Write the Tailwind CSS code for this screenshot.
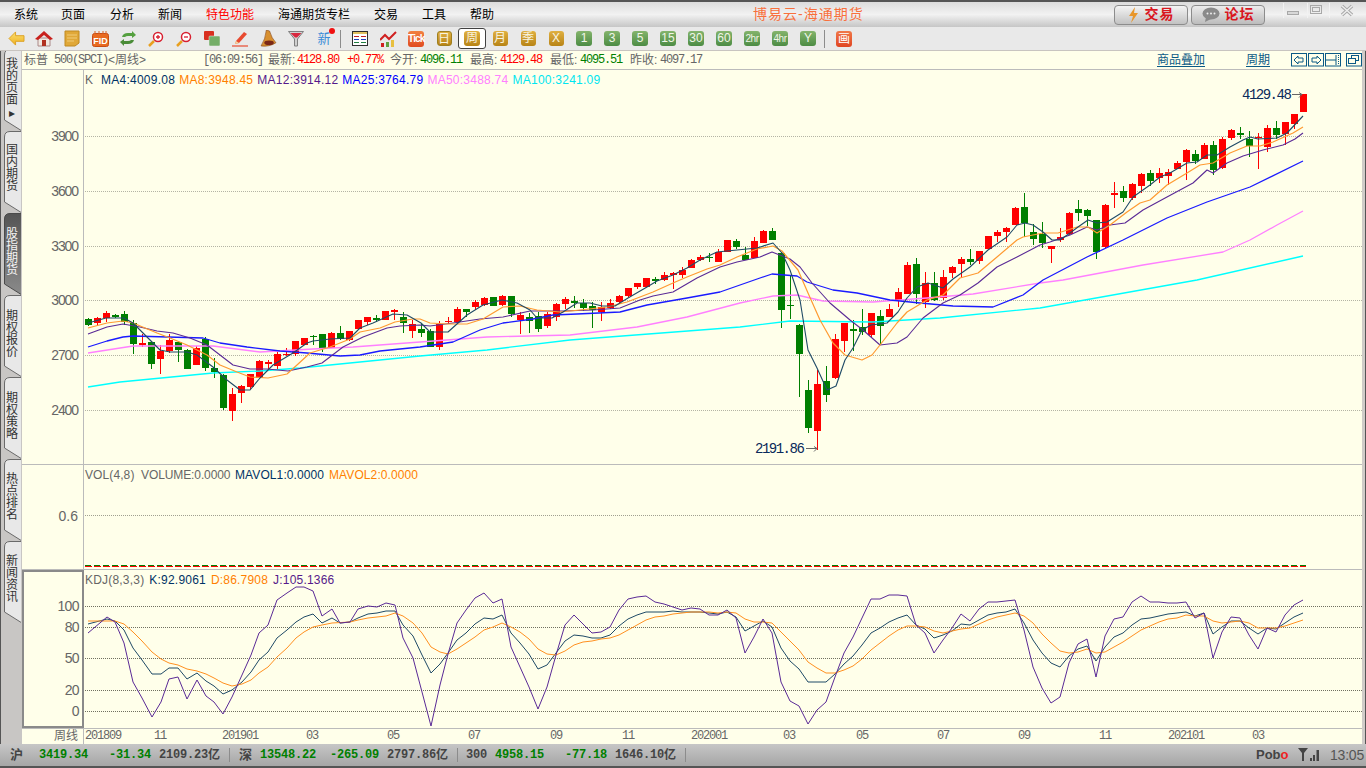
<!DOCTYPE html>
<html lang="zh-CN">
<head>
  <meta charset="UTF-8"/>
  <title>博易云-海通期货</title>
  <script src="https://cdn.jsdelivr.net/npm/@tailwindcss/browser@4"></script>
</head>
<body class="bg-[#c8c8c8] font-['Liberation_Sans','Noto_Sans_CJK_SC',sans-serif] text-[12px]">
<div class="w-[1366px] h-[768px] overflow-hidden flex flex-col border-t-2 border-[#555555]">

  <!-- menu bar -->
  <div class="h-[25px] shrink-0 flex items-center pl-[14px] text-black bg-linear-to-b from-[#dcdcdc] via-[#f2f2f2] to-[#c6c6c6]">
    <span class="w-[47px]">系统</span>
    <span class="w-[49px]">页面</span>
    <span class="w-[48px]">分析</span>
    <span class="w-[48px]">新闻</span>
    <span class="w-[72px] text-[#ff0000]">特色功能</span>
    <span class="w-[96px]">海通期货专栏</span>
    <span class="w-[48px]">交易</span>
    <span class="w-[48px]">工具</span>
    <span class="w-[48px]">帮助</span>
    <span class="ml-[235px] w-[361px] text-[14px] tracking-[1px] text-[#f8703c]">博易云-海通期货</span>
    <div class="flex gap-[3px]">
      <div class="w-[74px] h-[20px] rounded-[4px] border border-[#8c8c8c] bg-linear-to-b from-[#f4f4f4] to-[#c2c2c2] flex items-center justify-center gap-[6px] text-[14px] font-bold tracking-[1px] text-[#d9161e]">
        <svg width="11" height="16" viewBox="0 0 11 16"><path d="M7 0 L1 9 H5 L3 16 L10 6 H6 Z" fill="#e8962a"/></svg>
        <span>交易</span>
      </div>
      <div class="w-[74px] h-[20px] rounded-[4px] border border-[#8c8c8c] bg-linear-to-b from-[#ececec] to-[#bcbcbc] flex items-center justify-center gap-[5px] text-[14px] font-bold tracking-[1px] text-[#d9161e]">
        <svg width="18" height="15" viewBox="0 0 18 15"><ellipse cx="9" cy="6.5" rx="8.5" ry="6" fill="#8a8a8a"/><path d="M4 10 L3 15 L9 12 Z" fill="#8a8a8a"/><circle cx="5.5" cy="6.5" r="1" fill="#eee"/><circle cx="9" cy="6.5" r="1" fill="#eee"/><circle cx="12.5" cy="6.5" r="1" fill="#eee"/></svg>
        <span>论坛</span>
      </div>
    </div>
    <div class="ml-[17px] flex items-start h-[22px] -mt-[2px]">
      <svg width="84" height="16" viewBox="0 0 84 16">
        <rect x="1" y="0" width="1" height="15" fill="#f2f2f2"/>
        <rect x="25" y="0" width="1" height="15" fill="#f2f2f2"/>
        <rect x="47" y="0" width="1" height="15" fill="#f2f2f2"/>
        <rect x="5.500" y="8.500" width="11" height="3" fill="#d8d8d8" stroke="#a8a8a8"/>
        <rect x="28.500" y="2.500" width="11" height="8" fill="none" stroke="#a8a8a8"/>
        <rect x="30.500" y="4.500" width="7" height="4" fill="none" stroke="#a8a8a8"/>
        <path d="M60 3 L70 12 M70 3 L60 12" stroke="#a8a8a8" stroke-width="3.500"/>
        <path d="M60 3 L70 12 M70 3 L60 12" stroke="#eeeeee" stroke-width="1.500"/>
      </svg>
    </div>
  </div>

  <!-- toolbar -->
  <div class="h-[23px] shrink-0 flex items-center pl-[2px] bg-[#e9e9e9] text-[12px]">
    <div class="w-[28px] flex justify-center"><svg width="17" height="15" viewBox="0 0 18 16"><defs><linearGradient id="backfill" x1="0" y1="0" x2="0" y2="1"><stop offset="0" stop-color="#fbe070"/><stop offset="1" stop-color="#efb020"/></linearGradient></defs><path d="M8 1 L1 8 L8 15 V11 H17 V5 H8 Z" fill="url(#backfill)" stroke="#dca020"/></svg></div>
    <div class="w-[28px] flex justify-center"><svg width="18" height="17" viewBox="0 0 18 17"><path d="M3 8 V16 H15 V8 Z" fill="#f0e8e0" stroke="#a88"/><rect x="7" y="10" width="4" height="6" fill="#b03020"/><path d="M0 9 L9 1 L18 9 L15 10 L9 5 L3 10 Z" fill="#c8201c"/></svg></div>
    <div class="w-[28px] flex justify-center"><svg width="16" height="17" viewBox="0 0 16 17"><path d="M1 1 H15 V13 L11 16 H1 Z" fill="#e0a838" stroke="#c08a20"/><path d="M3 5 H13 M3 8 H13 M3 11 H10" stroke="#f0cc78"/></svg></div>
    <div class="w-[28px] flex justify-center"><svg width="17" height="16" viewBox="0 0 17 16"><rect x="0.500" y="2.500" width="16" height="13" rx="2" fill="#e86a20" stroke="#c84c14"/><path d="M3 0 V3 M7 0 V3 M11 0 V3 M14 0 V3" stroke="#d86020"/><text x="8.500" y="13" text-anchor="middle" font-size="9" font-weight="700" fill="#fff">FID</text></svg></div>
    <div class="w-[28px] flex justify-center"><svg width="16" height="15" viewBox="0 0 16 15"><path d="M2 6 Q3 2 8 2 H12 V0 L16 4 L12 7 V5 H8 Q6 5 5 6 Z" fill="#55a040"/><path d="M14 9 Q13 13 8 13 H4 V15 L0 11 L4 8 V10 H8 Q10 10 11 9 Z" fill="#4a8c38"/></svg></div>
    <div class="w-[28px] flex justify-center"><svg width="16" height="16" viewBox="0 0 16 16"><path d="M1 15 L6 10" stroke="#e8a020" stroke-width="2.500"/><circle cx="10" cy="6" r="4.500" fill="#fff" stroke="#d82030" stroke-width="1.500"/><path d="M8 6 H12 M10 4 V8" stroke="#d82030" stroke-width="1.300"/></svg></div>
    <div class="w-[28px] flex justify-center"><svg width="16" height="16" viewBox="0 0 16 16"><path d="M1 15 L6 10" stroke="#e8a020" stroke-width="2.500"/><circle cx="10" cy="6" r="4.500" fill="#fff" stroke="#d82030" stroke-width="1.500"/><path d="M8 6 H12" stroke="#d82030" stroke-width="1.300"/></svg></div>
    <div class="w-[28px] flex justify-center"><svg width="16" height="15" viewBox="0 0 16 15"><rect x="0" y="0" width="10" height="9" rx="1" fill="#d83020"/><rect x="5" y="5" width="11" height="10" rx="1" fill="#74ae68" stroke="#e9e9e9" stroke-width="0.500"/></svg></div>
    <div class="w-[28px] flex justify-center"><svg width="16" height="16" viewBox="0 0 16 16"><path d="M4 10 L12 1 L15 3 L7 12 L3 13 Z" fill="#e84a30"/><path d="M3 13 L4 10 L7 12 Z" fill="#f4d8a0"/><path d="M0 15 H16" stroke="#e84a30" stroke-width="1.200"/></svg></div>
    <div class="w-[28px] flex justify-center"><svg width="17" height="17" viewBox="0 0 16 16"><path d="M6 0 L9 1 Q11 8 15 12 Q9 16 1 15 Q5 9 6 0 Z" fill="#d89030" stroke="#8a4a18" stroke-width="0.600"/><ellipse cx="8.500" cy="12" rx="4.500" ry="2.200" fill="#7a2818"/></svg></div>
    <div class="w-[28px] flex justify-center"><svg width="16" height="16" viewBox="0 0 16 16"><path d="M0.500 0.500 H15.500 L9.500 8 V15 H6.500 V8 Z" fill="#d0d0d0" stroke="#808080"/><path d="M2.500 2 H13.500 L9 6.500 H7 Z" fill="#d82840"/></svg></div>
    <div class="w-[28px] relative flex justify-center text-[13px] text-[#3a8cd8]">新<span class="absolute right-[3px] -top-[1px] size-[6px] rounded-full bg-[#f01010]"></span></div>

    <span class="ml-[2px] mr-[5px] w-px h-[18px] bg-[#8c8c8c]"></span>

    <div class="w-[28px] flex justify-center"><svg width="16" height="15" viewBox="0 0 16 15"><rect x="0.500" y="0.500" width="15" height="14" fill="#fff" stroke="#303030"/><rect x="1" y="1" width="14" height="2" fill="#e0c060"/><path d="M2 5.500 H7 M9 5.500 H14" stroke="#c02020"/><path d="M2 8.500 H7 M9 8.500 H14" stroke="#2040c0"/><path d="M2 11.500 H7 M9 11.500 H14" stroke="#208040"/></svg></div>
    <div class="w-[28px] flex justify-center"><svg width="17" height="16" viewBox="0 0 17 16"><path d="M0 9 L5 4 L9 8 L16 1" fill="none" stroke="#d02020" stroke-width="2"/><rect x="1" y="12" width="3" height="4" fill="#d02020"/><rect x="6" y="11" width="3" height="5" fill="#60a040"/><rect x="11" y="9" width="3" height="7" fill="#e8c040"/></svg></div>
    <div class="w-[28px] flex justify-center"><span class="w-[16px] h-[16px] rounded-[3px] bg-linear-to-b from-[#f28040] to-[#e04a20] text-[#fff] text-[10px] font-bold tracking-[-0.8px] leading-[16px] text-center">Tick</span></div>
    <div class="w-[28px] flex justify-center"><span class="w-[15px] h-[15px] rounded-[3px] bg-linear-to-b from-[#e0b040] to-[#b88414] text-[#f8f4e0] text-[12px] leading-[15px] text-center border border-[#a08020]">日</span></div>
    <div class="w-[28px] flex justify-center"><span class="w-[28px] h-[21px] flex items-center justify-center rounded-[3px] bg-white border border-[#404040]"><span class="w-[16px] h-[15px] rounded-[3px] bg-linear-to-b from-[#e0b040] to-[#b88414] text-[#f8f4e0] text-[12px] leading-[15px] text-center">周</span></span></div>
    <div class="w-[28px] flex justify-center"><span class="w-[15px] h-[15px] rounded-[3px] bg-linear-to-b from-[#e0b040] to-[#b88414] text-[#f8f4e0] text-[12px] leading-[15px] text-center">月</span></div>
    <div class="w-[28px] flex justify-center"><span class="w-[15px] h-[15px] rounded-[3px] bg-linear-to-b from-[#e0b040] to-[#b88414] text-[#f8f4e0] text-[12px] leading-[15px] text-center">季</span></div>
    <div class="w-[28px] flex justify-center"><span class="w-[15px] h-[15px] rounded-[3px] bg-linear-to-b from-[#e0b040] to-[#b88414] text-[#f8f4e0] text-[12px] leading-[15px] text-center">X</span></div>
    <div class="w-[28px] flex justify-center"><span class="w-[16px] h-[15px] rounded-[3px] bg-linear-to-b from-[#84b46c] to-[#4c8c44] text-[#f0f6e8] text-[12px] leading-[15px] text-center">1</span></div>
    <div class="w-[28px] flex justify-center"><span class="w-[16px] h-[15px] rounded-[3px] bg-linear-to-b from-[#84b46c] to-[#4c8c44] text-[#f0f6e8] text-[12px] leading-[15px] text-center">3</span></div>
    <div class="w-[28px] flex justify-center"><span class="w-[16px] h-[15px] rounded-[3px] bg-linear-to-b from-[#84b46c] to-[#4c8c44] text-[#f0f6e8] text-[12px] leading-[15px] text-center">5</span></div>
    <div class="w-[28px] flex justify-center"><span class="w-[16px] h-[15px] rounded-[3px] bg-linear-to-b from-[#84b46c] to-[#4c8c44] text-[#f0f6e8] text-[12px] leading-[15px] text-center">15</span></div>
    <div class="w-[28px] flex justify-center"><span class="w-[16px] h-[15px] rounded-[3px] bg-linear-to-b from-[#84b46c] to-[#4c8c44] text-[#f0f6e8] text-[12px] leading-[15px] text-center">30</span></div>
    <div class="w-[28px] flex justify-center"><span class="w-[16px] h-[15px] rounded-[3px] bg-linear-to-b from-[#84b46c] to-[#4c8c44] text-[#f0f6e8] text-[12px] leading-[15px] text-center">60</span></div>
    <div class="w-[28px] flex justify-center"><span class="w-[16px] h-[15px] rounded-[3px] bg-linear-to-b from-[#84b46c] to-[#4c8c44] text-[#f0f6e8] text-[10px] tracking-[-0.5px] leading-[15px] text-center">2hr</span></div>
    <div class="w-[28px] flex justify-center"><span class="w-[16px] h-[15px] rounded-[3px] bg-linear-to-b from-[#84b46c] to-[#4c8c44] text-[#f0f6e8] text-[10px] tracking-[-0.5px] leading-[15px] text-center">4hr</span></div>
    <div class="w-[28px] flex justify-center"><span class="w-[16px] h-[15px] rounded-[3px] bg-linear-to-b from-[#84b46c] to-[#4c8c44] text-[#f0f6e8] text-[12px] leading-[15px] text-center">Y</span></div>

    <span class="ml-[2px] mr-[5px] w-px h-[18px] bg-[#8c8c8c]"></span>

    <span class="w-[16px] h-[16px] ml-[6px] rounded-[3px] bg-linear-to-b from-[#f07848] to-[#e04420] text-[#fff] text-[12px] leading-[16px] text-center">画</span>
  </div>
  <div class="h-px shrink-0 bg-[#c8c4c0]"></div>

  <!-- middle -->
  <div class="flex-1 flex min-h-0 border-l border-[#555555]">

    <!-- side tabs -->
    <div class="w-[21px] shrink-0 pl-[3px] bg-[#c8c6c4] flex flex-col text-[#333333]">
      <div class="relative h-[80px] w-[17px]">
        <svg class="absolute inset-0" width="17" height="80" viewBox="0 2 17 80"><path d="M.5 71 V6 Q.5 .5 6 .5 H18 V82 Z" fill="#e8e8e8" stroke="#6a6a6a"/></svg>
        <div class="relative pl-[2px] pt-[7px] w-[14px] leading-[12px] text-center">我的页面<span class="block text-[12px] leading-[14px] -ml-[1px]">▸</span></div>
      </div>
      <div class="relative h-[82px] w-[17px]">
        <svg class="absolute inset-0" width="17" height="82" viewBox="0 0 17 82"><path d="M.5 71 V6 Q.5 .5 6 .5 H18 V82 Z" fill="#e8e8e8" stroke="#6a6a6a"/></svg>
        <div class="relative pl-[2px] pt-[13px] w-[14px] leading-[12px] text-center">国内期货</div>
      </div>
      <div class="relative h-[82px] w-[17px]">
        <svg class="absolute inset-0" width="17" height="82" viewBox="0 0 17 82"><defs><linearGradient id="tabon" x1="0" y1="0" x2="0" y2="1"><stop offset="0" stop-color="#555555"/><stop offset="1" stop-color="#8a8a8a"/></linearGradient></defs><path d="M.5 71 V6 Q.5 .5 6 .5 H18 V82 Z" fill="url(#tabon)" stroke="#4a4a4a"/></svg>
        <div class="relative pl-[2px] pt-[15px] w-[14px] leading-[12px] text-center text-[#f4f4f4]">股指期货</div>
      </div>
      <div class="relative h-[82px] w-[17px]">
        <svg class="absolute inset-0" width="17" height="82" viewBox="0 0 17 82"><path d="M.5 71 V6 Q.5 .5 6 .5 H18 V82 Z" fill="#e8e8e8" stroke="#6a6a6a"/></svg>
        <div class="relative pl-[2px] pt-[15px] w-[14px] leading-[12px] text-center">期权报价</div>
      </div>
      <div class="relative h-[82px] w-[17px]">
        <svg class="absolute inset-0" width="17" height="82" viewBox="0 0 17 82"><path d="M.5 71 V6 Q.5 .5 6 .5 H18 V82 Z" fill="#e8e8e8" stroke="#6a6a6a"/></svg>
        <div class="relative pl-[2px] pt-[15px] w-[14px] leading-[12px] text-center">期权策略</div>
      </div>
      <div class="relative h-[82px] w-[17px]">
        <svg class="absolute inset-0" width="17" height="82" viewBox="0 0 17 82"><path d="M.5 71 V6 Q.5 .5 6 .5 H18 V82 Z" fill="#e8e8e8" stroke="#6a6a6a"/></svg>
        <div class="relative pl-[2px] pt-[14px] w-[14px] leading-[12px] text-center">热点排名</div>
      </div>
      <div class="relative h-[82px] w-[17px]">
        <svg class="absolute inset-0" width="17" height="82" viewBox="0 0 17 82"><path d="M.5 71 V6 Q.5 .5 6 .5 H18 V82 Z" fill="#e8e8e8" stroke="#6a6a6a"/></svg>
        <div class="relative pl-[2px] pt-[14px] w-[14px] leading-[12px] text-center">新闻资讯</div>
      </div>
    </div>

    <!-- chart column -->
    <div class="w-[1340px] shrink-0 flex flex-col bg-[#ffffea] text-[#666666]">
      <!-- quote line -->
      <div class="h-[19px] shrink-0 border-b border-[#bbbbbb] flex items-center pl-[2px] whitespace-nowrap">
        <span class="w-[179px] flex"><span>标普</span><span class="ml-[6px] font-['Liberation_Mono'] tracking-[-1.2px]">500(SPCI)</span><span>&lt;周线&gt;</span></span>
        <span class="w-[65px] font-['Liberation_Mono'] tracking-[-1.2px]">[06:09:56]</span>
        <span class="w-[29px]">最新:</span>
        <span class="w-[50px] font-['Liberation_Mono'] tracking-[-1.2px] text-[#ff0000]">4128.80</span>
        <span class="w-[43px] font-['Liberation_Mono'] tracking-[-1.2px] text-[#ff0000]">+0.77%</span>
        <span class="w-[30px]">今开:</span>
        <span class="w-[50px] font-['Liberation_Mono'] tracking-[-1.2px] text-[#008000]">4096.11</span>
        <span class="w-[30px]">最高:</span>
        <span class="w-[50px] font-['Liberation_Mono'] tracking-[-1.2px] text-[#ff0000]">4129.48</span>
        <span class="w-[30px]">最低:</span>
        <span class="w-[50px] font-['Liberation_Mono'] tracking-[-1.2px] text-[#008000]">4095.51</span>
        <span class="w-[30px]">昨收:</span>
        <span class="w-[497px] font-['Liberation_Mono'] tracking-[-1.2px]">4097.17</span>
        <span class="w-[89px] text-[#0b5a86] underline underline-offset-2">商品叠加</span>
        <span class="w-[45px] text-[#0b5a86] underline underline-offset-2">周期</span>
        <svg width="71" height="14" viewBox="0 0 71 14" fill="none" stroke="#0b5a86">
          <rect x=".5" y=".5" width="15" height="12.500"/><path d="M12 5 H7 V3 L3 7 L7 11 V9 H12 Z"/>
          <rect x="17.500" y=".5" width="15" height="12.500"/><path d="M21 5 H26 V3 L30 7 L26 11 V9 H21 Z"/>
          <rect x="34.500" y=".5" width="15" height="12.500"/><path d="M34.500 7 H45 M45 2 V12" /><path d="M47.500 2 V12" stroke-dasharray="1 1"/>
          <rect x="55.500" y=".5" width="15" height="12.500"/><rect x="60.500" y="2.500" width="7" height="5"/><rect x="57.500" y="5.500" width="7" height="5" fill="#ffffea"/>
        </svg>
      </div>

      <!-- price pane -->
      <div class="h-[395px] shrink-0 flex border-b border-[#bbbbbb]">
        <div class="relative w-[62px] shrink-0 border-r border-[#bbbbbb] text-[14px] tracking-[-1.1px] text-[#666666]">
          <span class="absolute right-[5px] top-[58px] leading-[16px]">3900</span>
          <span class="absolute right-[5px] top-[113px] leading-[16px]">3600</span>
          <span class="absolute right-[5px] top-[168px] leading-[16px]">3300</span>
          <span class="absolute right-[5px] top-[222px] leading-[16px]">3000</span>
          <span class="absolute right-[5px] top-[277px] leading-[16px]">2700</span>
          <span class="absolute right-[5px] top-[332px] leading-[16px]">2400</span>
        </div>
        <div class="relative flex-1">
          <svg id="price" class="block" width="1278" height="394" viewBox="84 70 1278 394"></svg>
          <div class="absolute left-[1px] top-[3px] flex gap-[4px] leading-[14px] whitespace-nowrap tracking-[0.25px]">
            <span class="w-[12px] text-[#666666]">K</span>
            <span class="text-[#003366]">MA4:4009.08</span>
            <span class="text-[#ff8000]">MA8:3948.45</span>
            <span class="text-[#551a8b]">MA12:3914.12</span>
            <span class="text-[#0000ff]">MA25:3764.79</span>
            <span class="text-[#ff80ff]">MA50:3488.74</span>
            <span class="text-[#00e6f0]">MA100:3241.09</span>
          </div>
        </div>
      </div>

      <!-- volume pane -->
      <div class="h-[105px] shrink-0 flex border-b border-[#bbbbbb]">
        <div class="relative w-[62px] shrink-0 border-r border-[#bbbbbb] text-[14px] text-[#666666]">
          <span class="absolute right-[5px] top-[43px] leading-[16px]">0.6</span>
        </div>
        <div class="relative flex-1">
          <svg id="vol" class="block" width="1278" height="104" viewBox="84 465 1278 104"></svg>
          <div class="absolute left-[1px] top-[3px] flex leading-[14px] whitespace-nowrap tracking-[0.1px]">
            <span class="w-[56px] text-[#666666]">VOL(4,8)</span>
            <span class="w-[94px] tracking-[-0.1px] text-[#666666]">VOLUME:0.0000</span>
            <span class="w-[94px] text-[#003366]">MAVOL1:0.0000</span>
            <span class="text-[#ff8000]">MAVOL2:0.0000</span>
          </div>
        </div>
      </div>

      <!-- kdj pane -->
      <div class="h-[159px] shrink-0 flex border-b border-[#bbbbbb]">
        <div class="relative w-[62px] shrink-0 border-2 border-[#8a8a8a] border-b-2 text-[14px] tracking-[-0.6px] text-[#666666]">
          <span class="absolute right-[3px] top-[26px] leading-[16px]">100</span>
          <span class="absolute right-[3px] top-[47px] leading-[16px]">80</span>
          <span class="absolute right-[3px] top-[78px] leading-[16px]">50</span>
          <span class="absolute right-[3px] top-[110px] leading-[16px]">20</span>
          <span class="absolute right-[3px] top-[131px] leading-[16px]">0</span>
        </div>
        <div class="relative flex-1">
          <svg id="kdj" class="block" width="1278" height="158" viewBox="84 570 1278 158"></svg>
          <div class="absolute left-[1px] top-[3px] flex gap-[5px] leading-[14px] whitespace-nowrap tracking-[0.2px]">
            <span class="text-[#666666]">KDJ(8,3,3)</span>
            <span class="text-[#003366]">K:92.9061</span>
            <span class="text-[#ff8000]">D:86.7908</span>
            <span class="text-[#551a8b]">J:105.1366</span>
          </div>
        </div>
      </div>

      <!-- date axis -->
      <div class="h-[15px] shrink-0 flex leading-[15px]">
        <div class="w-[62px] shrink-0 border-r border-[#bbbbbb] text-right pr-[5px]">周线</div>
        <div class="relative flex-1 font-['Liberation_Mono'] tracking-[-1.2px]">
          <span class="absolute left-[1px]">201809</span>
          <span class="absolute left-[70px]">11</span>
          <span class="absolute left-[138px]">201901</span>
          <span class="absolute left-[222px]">03</span>
          <span class="absolute left-[303px]">05</span>
          <span class="absolute left-[384px]">07</span>
          <span class="absolute left-[466px]">09</span>
          <span class="absolute left-[538px]">11</span>
          <span class="absolute left-[607px]">202001</span>
          <span class="absolute left-[699px]">03</span>
          <span class="absolute left-[772px]">05</span>
          <span class="absolute left-[853px]">07</span>
          <span class="absolute left-[934px]">09</span>
          <span class="absolute left-[1015px]">11</span>
          <span class="absolute left-[1084px]">202101</span>
          <span class="absolute left-[1168px]">03</span>
        </div>
      </div>
    </div>
    <div class="flex-1 bg-[#d0ccc8] border-r border-[#555555]"></div>
  </div>

  <!-- status bar -->
  <div class="h-[24px] shrink-0 flex items-center border-b-2 border-[#555555] bg-linear-to-b from-[#c6c6c6] to-[#a6a6a6] pl-[10px] font-bold text-[#444444] whitespace-nowrap">
    <span class="w-[29px] text-[13px]">沪</span>
    <span class="w-[70px] font-['Liberation_Mono'] tracking-[-0.2px] text-[#008000]">3419.34</span>
    <span class="w-[50px] font-['Liberation_Mono'] tracking-[-0.2px] text-[#008000]">-31.34</span>
    <span class="w-[70px] flex"><span class="font-['Liberation_Mono'] tracking-[-0.2px]">2109.23</span><span>亿</span></span>
    <span class="w-[10px] h-[14px] border-l border-[#8c8c8c]"></span>
    <span class="w-[21px] text-[13px]">深</span>
    <span class="w-[70px] font-['Liberation_Mono'] tracking-[-0.2px] text-[#008000]">13548.22</span>
    <span class="w-[57px] font-['Liberation_Mono'] tracking-[-0.2px] text-[#008000]">-265.09</span>
    <span class="w-[70px] flex"><span class="font-['Liberation_Mono'] tracking-[-0.2px]">2797.86</span><span>亿</span></span>
    <span class="w-[9px] h-[14px] border-l border-[#8c8c8c]"></span>
    <span class="w-[29px] font-['Liberation_Mono'] tracking-[-0.2px]">300</span>
    <span class="w-[70px] font-['Liberation_Mono'] tracking-[-0.2px] text-[#008000]">4958.15</span>
    <span class="w-[50px] font-['Liberation_Mono'] tracking-[-0.2px] text-[#008000]">-77.18</span>
    <span class="w-[70px] flex"><span class="font-['Liberation_Mono'] tracking-[-0.2px]">1646.10</span><span>亿</span></span>
    <span class="w-[571px] h-[14px] border-l border-[#8c8c8c]"></span>
    <span class="w-[42px] text-[13px] text-[#444444]">Pob<span class="text-[#ee2222]">o</span></span>
    <svg class="mr-[10px]" width="22" height="14" viewBox="0 0 22 14" fill="#444444"><path d="M0 0 H10 L6 5 V13 H4 V5 Z"/><rect x="12" y="10" width="2" height="3"/><rect x="15" y="7" width="2" height="6"/><rect x="18.500" y="2" width="2.500" height="11"/></svg>
    <span class="font-normal text-[14px] tracking-[-0.2px] text-[#555555]">13:05</span>
  </div>
</div>

<script>
  // candles traced from the chart: colour top bottom high low, in 3x pixels from a crop origin
  const CANDLES = [
    [290, "g 87 105 84 108;r 84 98 82 108;r 69 85 62 95;g 75 81 72 85;g 72 96 62 104;g 100 162 90 192;r 159 165 132 172;g 156 222 156 237;r 183 207 165 252;r 150 183 132 189;g 156 180 156 216;g 180 237 178 237;r 174 225 168 225;g 147 234 141 243;g 234 246 204 264;g 255 354 252 360;r 312 363 294 393;r 288 309 285 339;r 252 290 252 297;r 213 264 210 267;r 215 222 210 238;r 192 228 186 237;r 192 195 174 198;r 153 192 153 198;r 144 165 144 165;g 138 141 135 165;g 132 174 132 186;r 129 174 126 174;g 129 147 108 150;r 123 150 123 152;r 90 117 90 117;r 81 96 81 105;g 84 90 75 96;r 63 90 63 90;r 60 66 57 90;g 81 99 66 129;r 102 123 90 144"],
    [220, "g 327 340 312 352;g 333 380 327 382;r 312 381 303 390;r 303 306 291 312;r 267 306 261 309;g 267 276 267 291;r 246 261 240 270;r 234 255 231 258;g 231 258 231 258;r 228 255 225 258;g 228 282 228 291;r 285 300 276 342;g 291 303 280 339;g 288 327 276 336;r 282 318 276 324;r 252 291 249 303;r 237 252 231 267;g 243 248 228 264;g 249 264 237 273;g 258 269 246 324;r 261 276 246 303;r 249 264 237 267;r 228 246 225 249;r 204 228 204 231;r 189 201 189 207;r 174 201 174 201;g 177 183 171 192;r 165 180 156 183;r 160 164 156 207;r 150 165 141 174;r 120 144 117 144;r 111 120 105 123;g 112 115 99 126;r 96 126 87 126;r 60 96 60 96;g 63 81 57 87;g 105 120 81 120;r 63 114 51 114;r 33 69 30 69;g 33 60 24 60;g 99 270 96 324;g 255 258 165 297;g 315 402 312 531;g 510 624 480 639;r 492 633 450 690;g 483 525 438 546;r 357 474 342 477;r 309 363 309 396;g 327 333 300 393;g 321 336 267 345;r 279 345 279 351;g 288 318 270 372;r 267 291 252 291;r 216 240 204 261;r 135 222 126 222;g 132 222 114 252;r 189 246 156 264;g 189 240 156 243;r 171 234 150 240;r 141 159 138 174;r 117 132 111 174;g 117 126 87 135;r 93 123 93 132;r 48 87 48 87;r 36 48 30 66;r 24 36 21 66"],
    [80, "r 384 435 381 435;g 381 429 339 471;g 456 477 432 495;g 462 489 426 504;r 498 507 498 549;r 471 480 444 486;r 399 462 396 465;g 387 399 360 423;g 390 408 387 438;g 420 516 420 537;r 375 501 372 504;r 339 345 306 384;g 333 354 318 366;r 312 354 309 360;r 282 318 279 339;g 279 303 270 318;r 279 294 264 309;r 276 288 267 315;r 249 267 243 267;r 210 246 207 300;g 222 243 210 252;r 195 237 189 237;g 195 270 183 285;r 177 264 171 267;r 150 174 147 180;g 160 164 141 177;g 177 198 153 231;r 172 175 159 267;r 144 201 135 216;g 144 165 123 177;r 126 162 126 195;r 102 132 102 147;r 42 96 42 96"]
  ];
  const COL = { r: "#ff0000", g: "#007f00" };

  const MA = [
    ["#00ffff", 1.3, "88,387 120,382 213,373 260,371 300,368 420,356 487,350 570,340 740,327 790,321 873,322 940,318 1040,308 1197,280 1303,256"],
    ["#ff80ff", 1.3, "88,353 133,346 213,346 260,352 313,349 353,347 420,342 487,337 570,335 637,327 687,317 740,303 773,296 797,295 823,301 873,302 927,298 973,294 1040,283 1063,280 1143,265 1223,252 1250,240 1277,225 1303,211"],
    ["#1a1aff", 1.3, "88,347 107,341 123,337 133,336 203,338 220,343 247,347 280,351 307,353 340,356 360,355 380,351 420,347 453,342 480,330 503,323 533,319 553,315 577,314 620,312 647,305 687,298 720,292 760,278 772,274 797,276 807,282 833,290 857,293 890,300 920,303 953,306 993,307 1023,295 1043,280 1087,257 1123,240 1167,218 1207,202 1250,187 1303,161"],
    ["#5a2a96", 1.1, "88,334 107,327 123,324 140,327 157,331 173,333 190,338 207,345 220,355 233,365 250,369 267,369 288,371 307,367 322,363 343,347 363,337 387,328 400,326 420,325 430,326 453,323 480,319 503,317 530,311 563,311 593,310 620,308 640,300 653,296 673,292 697,278 720,267 737,262 760,257 772,252 790,259 800,267 812,283 830,303 850,320 863,330 880,345 897,343 907,337 923,318 943,303 960,295 978,283 997,267 1017,257 1040,245 1050,242 1070,235 1087,227 1097,230 1110,225 1125,223 1143,210 1167,197 1193,183 1207,170 1213,173 1227,163 1243,156 1263,150 1283,145 1295,139 1303,133"],
    ["#ff9a30", 1.2, "88,328 107,323 123,321 133,323 157,333 170,338 187,345 207,355 220,365 237,372 250,377 268,378 287,374 297,365 310,353 330,347 350,339 360,332 380,328 395,322 413,319 420,319 430,323 448,324 467,324 483,319 503,307 520,306 537,310 560,312 580,310 607,307 627,302 653,292 673,283 687,277 707,269 720,265 737,257 757,249 773,246 782,251 798,270 808,293 820,320 833,343 845,355 862,360 872,355 880,345 897,323 907,312 927,300 943,295 960,278 978,273 997,257 1017,240 1023,237 1043,233 1058,233 1077,227 1088,227 1097,233 1110,225 1127,212 1140,203 1150,200 1167,185 1187,173 1200,165 1213,163 1230,153 1247,146 1260,146 1273,142 1293,133 1303,127"],
    ["#1f4a66", 1.1, "88,323 106,318 124,318 133,323 143,333 160,350 170,352 187,352 197,355 213,367 227,380 240,390 250,390 260,378 273,365 293,353 307,343 313,341 330,339 350,338 360,328 373,323 393,314 407,315 421,323 430,332 448,332 467,315 483,305 502,300 517,303 530,310 537,318 552,318 563,312 577,303 590,303 602,306 615,306 628,298 647,287 657,281 673,275 687,268 700,260 717,252 737,250 757,248 773,243 782,253 790,270 800,300 808,350 817,368 827,390 836,386 845,360 853,348 862,330 871,325 887,323 898,312 907,298 917,287 928,283 943,288 953,279 970,267 988,250 1007,237 1017,225 1025,223 1033,225 1043,232 1052,240 1060,240 1070,233 1078,227 1088,220 1097,223 1107,222 1123,212 1133,197 1150,185 1160,177 1170,173 1187,163 1197,162 1207,155 1217,155 1230,147 1243,140 1250,137 1258,139 1277,138 1287,133 1303,116"]
  ];

  const KDJ = [
    ["#1f4a66", "88,624 107,619 115,621 124,630 133,648 142,660 152,674 161,674 169,668 178,668 187,679 197,673 206,681 214,686 223,694 232,690 242,682 251,672 259,660 268,652 277,638 287,630 296,622 304,617 313,614 322,623 332,618 340,623 350,622 358,618 368,614 377,613 386,611 395,611 403,625 413,636 422,655 431,673 440,664 448,653 457,640 466,633 475,624 484,618 493,619 502,615 511,633 520,643 529,654 538,669 547,665 556,653 565,641 574,635 583,636 592,638 601,638 610,635 619,626 628,619 637,615 646,612 655,612 664,612 673,611 682,612 691,612 700,612 709,613 718,614 727,612 736,617 745,631 754,626 763,621 772,627 781,648 790,661 799,669 808,682 817,682 826,682 835,674 844,664 853,656 862,645 871,633 880,628 889,622 898,618 907,615 916,625 925,629 934,638 943,635 952,631 961,624 970,625 979,620 988,615 997,613 1006,612 1015,609 1024,623 1033,640 1042,653 1051,663 1060,667 1069,656 1078,649 1087,646 1096,661 1105,647 1114,637 1123,633 1132,625 1141,619 1150,618 1159,616 1168,614 1177,613 1186,612 1195,616 1204,613 1213,634 1222,627 1231,621 1240,621 1249,628 1258,634 1267,628 1276,629 1285,623 1294,617 1303,613"],
    ["#ff9020", "88,621 115,621 124,624 133,632 142,641 152,652 161,659 169,663 178,665 187,669 197,671 206,674 214,678 223,683 232,686 242,684 251,680 259,673 268,667 277,657 287,648 296,638 304,632 313,627 322,625 332,623 350,622 358,620 368,618 377,617 386,616 395,613 403,616 413,623 422,633 431,647 440,652 448,654 457,649 466,643 475,637 484,630 493,627 502,623 511,627 520,632 529,639 538,649 547,654 556,655 565,651 574,645 583,642 592,641 601,639 610,638 619,635 628,630 637,625 646,620 655,617 664,616 673,614 682,613 691,612 700,612 709,612 718,613 727,612 736,613 745,619 754,622 763,622 772,623 781,632 790,641 799,650 808,662 817,668 826,673 835,673 844,670 853,666 862,659 871,650 880,643 889,636 898,630 907,626 916,626 925,627 934,631 943,633 952,631 961,629 970,628 979,624 988,620 997,617 1006,615 1015,613 1024,616 1033,623 1042,634 1051,643 1060,651 1069,653 1078,652 1087,649 1096,653 1105,652 1114,647 1123,642 1132,636 1141,630 1150,626 1159,622 1168,619 1177,618 1186,615 1195,616 1204,616 1213,621 1222,623 1231,622 1240,621 1249,623 1258,628 1267,628 1276,628 1285,626 1294,623 1303,620"],
    ["#5a2a96", "88,633 107,617 115,622 124,643 133,682 142,698 152,717 161,702 169,679 178,677 187,699 197,680 206,696 214,702 223,714 232,697 242,675 251,655 259,633 268,625 277,600 287,593 296,587 304,587 313,591 322,616 332,609 340,623 350,622 358,609 368,606 377,607 386,603 395,605 403,638 413,658 422,692 431,726 440,685 448,654 457,623 466,610 475,598 484,593 493,603 502,599 511,647 520,667 529,687 538,709 547,687 556,655 565,625 574,615 583,624 592,633 601,632 610,627 619,610 628,599 637,597 646,596 655,602 664,604 673,607 682,610 691,608 700,609 709,615 718,615 727,610 736,618 745,653 754,637 763,619 772,633 781,682 790,701 799,706 808,724 817,710 826,702 835,677 844,653 853,637 862,618 871,599 880,599 889,595 898,595 907,596 916,625 925,633 934,653 943,640 952,628 961,614 970,621 979,609 988,602 997,602 1006,601 1015,600 1024,630 1033,667 1042,688 1051,703 1060,697 1069,663 1078,644 1087,639 1096,677 1105,636 1114,619 1123,617 1132,602 1141,596 1150,602 1159,602 1168,603 1177,603 1186,602 1195,618 1204,613 1213,658 1222,632 1231,617 1240,618 1249,635 1258,649 1267,628 1276,632 1285,615 1294,605 1303,600"]
  ];

  function grid(ys, col) {
    return ys.map(y => `<line x1="85" x2="1362" y1="${y}" y2="${y}" stroke="${col}" stroke-dasharray="1 1"/>`).join("");
  }

  function line(col, w, pts) {
    return `<polyline points="${pts}" fill="none" stroke="${col}" stroke-width="${w}" stroke-linejoin="round"/>`;
  }

  function drawCandles() {
    let out = "", i = 0;
    CANDLES.forEach(([y0, rows]) => {
      rows.split(";").forEach(r => {
        const [c, top, bot, hi, lo] = r.split(" ");
        const x = Math.round(88.33 + 9 * i);
        const t = Math.round(y0 + top / 3), b = Math.round(y0 + bot / 3);
        const h = Math.round(y0 + hi / 3), l = Math.round(y0 + lo / 3);
        out += `<rect x="${x}" y="${h}" width="1" height="${Math.max(l - h, 1)}" fill="${COL[c]}"/>`;
        out += `<rect x="${x - 3}" y="${t}" width="7" height="${Math.max(b - t, 1)}" fill="${COL[c]}"/>`;
        i++;
      });
    });
    return `<g shape-rendering="crispEdges">${out}</g>`;
  }

  function label(x, y, s) {
    return `<text x="${x}" y="${y}" font-family="Liberation Mono" font-size="14" letter-spacing="-1.5" fill="#0a2a5a">${s}</text>`;
  }

  function arrow(x1, x2, y) {
    return `<path d="M${x1} ${y}.5 H${x2} M${x2 - 3} ${y - 2}.5 L${x2} ${y}.5 L${x2 - 3} ${y + 3}.5" fill="none" stroke="#666666"/>`;
  }

  document.getElementById("price").innerHTML =
    grid([136.5, 191.5, 246.5, 300.5, 355.5, 410.5], "#b4b4a4") +
    drawCandles() +
    MA.map(([c, w, p]) => line(c, w, p)).join("") +
    label(1242, 99, "4129.48") + arrow(1292, 1302, 94) +
    label(755, 453, "2191.86") + arrow(806, 817, 448);

  document.getElementById("vol").innerHTML =
    grid([515.5], "#a0a090") +
    `<line x1="85" x2="1306" y1="565.5" y2="565.5" stroke="#007f00" stroke-dasharray="6 3"/>` +
    `<line x1="85" x2="1306" y1="566.5" y2="566.5" stroke="#ff0000" stroke-dasharray="7 2"/>`;

  document.getElementById("kdj").innerHTML =
    grid([606.5, 627.5, 658.5, 690.5, 711.5], "#707060") +
    KDJ.map(([c, p]) => line(c, 1, p)).join("");
</script>
</body>
</html>
